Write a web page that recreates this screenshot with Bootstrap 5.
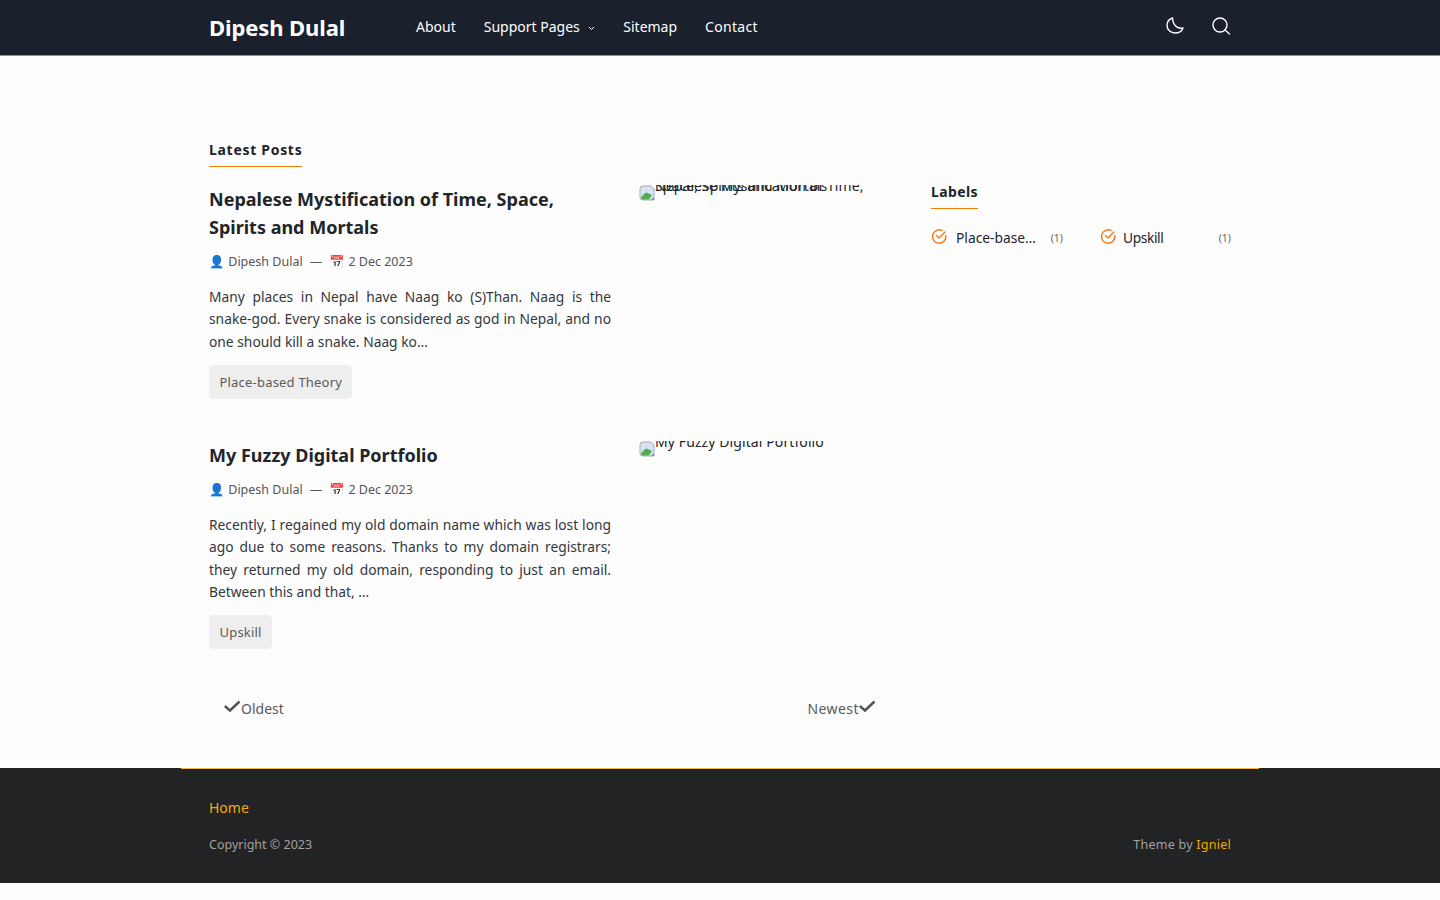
<!DOCTYPE html>
<html lang="en">
<head>
  <meta charset="UTF-8">
  <title>Dipesh Dulal</title>
  <link href="https://cdn.jsdelivr.net/npm/bootstrap@5.3.3/dist/css/bootstrap.min.css" rel="stylesheet">
  <style>
    body { font-family: "Noto Sans", sans-serif; font-size: 13.8px; line-height: 22px; color: #212529; background: #fdfdfd; }
    a { text-decoration: none; }
    .site-wrap { width: 1078px; margin: 0 auto; padding: 0 28px; }
    .site-head { height: 56px; background: #1a202c; border-bottom: 1px solid #8a9099; }
    .head-row { padding-bottom: 2px; }
    .brand-name { width: 207px; color: #fff; font-size: 22px; font-weight: 700; letter-spacing: -.1px; line-height: 54px; }
    .head-link { color: #fff; font-size: 14px; margin-right: 28px; }
    .head-link:last-child { letter-spacing: .3px; margin-right: 0; }
    .head-caret { margin-left: 8px; margin-right: .5px; }
    .head-tools { gap: 26px; padding-bottom: 2px; }
    .head-btn { color: #fff; display: block; line-height: 0; }
    .page-main { padding-top: 83px; height: 712px; }
    .post-col { width: 682px; }
    .side-col { width: 300px; margin-left: 40px; padding-top: 42px; }
    .sec-title { display: inline-block; font-size: 14px; font-weight: 700; letter-spacing: .7px; line-height: 20px; padding-bottom: 6px; border-bottom: 1px solid #f57c00; }
    .side-col .sec-title { letter-spacing: .4px; }
    .post-row { gap: 28px; margin-top: 18px; height: 238px; }
    .post-row + .post-row { margin-top: 18px; height: 232px; }
    .post-text { width: 402px; }
    .post-title { font-size: 18px; font-weight: 700; line-height: 28px; margin: 0 0 11px; color: #212529; }
    .post-meta { font-size: 12.5px; line-height: 20px; color: #555; margin-bottom: 14px; }
    .meta-dash { margin: 0 7px; }
    .post-sum { text-align: justify; margin: 0 0 12px; line-height: 22.3px; color: #33383d; }
    .tag-pill { display: inline-block; background: #eee; color: #5a5a5a; font-size: 13px; letter-spacing: .2px; line-height: 18px; padding: 8px 10px 8px 10.5px; border-radius: 5px; }
    .thumb-box { position: relative; width: 252px; height: 17px; overflow: hidden; font-size: 14px; line-height: 22px; }
    .thumb-box svg { position: absolute; left: 0; top: 0; }
    .alt-line { position: absolute; left: 16px; top: -10px; white-space: nowrap; letter-spacing: .1px; }
    .pager-row { padding: 0 15px; margin-top: 25px; color: #5a5a5a; font-size: 14px; }
    .pager-new { letter-spacing: .45px; }
    .pager-row svg { margin-top: 1px; }
    .label-row { margin-top: 18px; }
    .label-item { width: 169px; }
    .label-item + .label-item { width: 131px; }
    .label-tick { margin-top: -3px; }
    .label-name { color: #212529; }
    .label-name-a { margin-left: 8px; }
    .label-name-b { margin-left: 6px; letter-spacing: -.4px; }
    .label-count { color: #666; font-size: 10.5px; }
    .label-count-a { padding-right: 37px; }
    .site-foot { height: 115px; background: #222325; }
    .foot-inner { width: 1078px; margin: 0 auto; padding: 28px 28px 0; border-top: 1px solid #f0b73f; }
    .foot-home { color: #f4ab00; font-size: 14px; line-height: 22px; }
    .foot-copy { color: #a0a0a0; font-size: 12.5px; line-height: 20px; margin-top: 16px; }
    .foot-theme { letter-spacing: .25px; }
    .foot-copy a { color: #f4ab00; }
  </style>
</head>
<body>
  <header class="site-head">
    <div class="site-wrap head-row d-flex align-items-center">
      <a class="brand-name" href="#">Dipesh Dulal</a>
      <nav class="d-flex align-items-center">
        <a class="head-link" href="#">About</a>
        <a class="head-link" href="#">Support Pages<svg class="head-caret" width="7" height="5" viewBox="0 0 7 5" fill="none" stroke="#fff" stroke-width="1"><path d="M1 1l2.500 2.500L6 1"/></svg></a>
        <a class="head-link" href="#">Sitemap</a>
        <a class="head-link" href="#">Contact</a>
      </nav>
      <div class="head-tools ms-auto d-flex align-items-center">
        <a class="head-btn" href="#"><svg width="20" height="20" viewBox="0 0 20 20" fill="none" stroke="#fff" stroke-width="1.400" stroke-linejoin="round"><path d="M7.500 2C4 3 2 6 2 9.500 2 13.500 5.500 17 10 17c4 0 7-2 8-5-5 1-10-2-10.500-10z"/></svg></a>
        <a class="head-btn" href="#"><svg width="20" height="20" viewBox="0 0 20 20" fill="none" stroke="#fff" stroke-width="1.400"><circle cx="9" cy="9" r="7"/><path d="M14 14l4.500 4" stroke-linecap="round"/></svg></a>
      </div>
    </div>
  </header>

  <main class="page-main">
    <div class="site-wrap d-flex">
      <div class="post-col">
        <div class="sec-title">Latest Posts</div>

        <article class="post-row d-flex">
          <div class="post-text">
            <h2 class="post-title">Nepalese Mystification of Time, Space, Spirits and Mortals</h2>
            <div class="post-meta">👤 Dipesh Dulal<span class="meta-dash">—</span>📅 2 Dec 2023</div>
            <p class="post-sum">Many places in Nepal have Naag ko (S)Than. Naag is the snake-god. Every snake is considered as god in Nepal, and no one should kill a snake. Naag ko…</p>
            <a class="tag-pill" href="#">Place-based Theory</a>
          </div>
          <div class="thumb-box">
            <svg width="16" height="16" viewBox="0 0 16 16"><path d="M1 4a3 3 0 0 1 3-3h8l3 3v11H4a3 3 0 0 1-3-3z" fill="#d6e3f5" stroke="#a8adb3"/><path d="M2 13c2-4 5-6 7-5l4 2-3 4.500H3.500z" fill="#4caf50"/><path d="M12 15l3-3v3z" fill="#888"/></svg>
            <span class="alt-line">Nepalese Mystification of Time,</span>
            <span class="alt-line">Space, Spirits and Mortals</span>
          </div>
        </article>

        <article class="post-row d-flex">
          <div class="post-text">
            <h2 class="post-title">My Fuzzy Digital Portfolio</h2>
            <div class="post-meta">👤 Dipesh Dulal<span class="meta-dash">—</span>📅 2 Dec 2023</div>
            <p class="post-sum">Recently, I regained my old domain name which was lost long ago due to some reasons. Thanks to my domain registrars; they returned my old domain, responding to just an email. Between this and that, …</p>
            <a class="tag-pill" href="#">Upskill</a>
          </div>
          <div class="thumb-box">
            <svg width="16" height="16" viewBox="0 0 16 16"><path d="M1 4a3 3 0 0 1 3-3h8l3 3v11H4a3 3 0 0 1-3-3z" fill="#d6e3f5" stroke="#a8adb3"/><path d="M2 13c2-4 5-6 7-5l4 2-3 4.500H3.500z" fill="#4caf50"/><path d="M12 15l3-3v3z" fill="#888"/></svg>
            <span class="alt-line">My Fuzzy Digital Portfolio</span>
          </div>
        </article>

        <div class="pager-row d-flex justify-content-between">
          <a class="text-reset d-flex" href="#"><svg width="17" height="17" viewBox="0 0 17 17" fill="none" stroke="#555" stroke-width="2.500"><path d="M.8 7l5.200 4.500L15.500 2.500"/></svg>Oldest</a>
          <a class="text-reset pager-new d-flex" href="#">Newest<svg width="17" height="17" viewBox="0 0 17 17" fill="none" stroke="#555" stroke-width="2.500"><path d="M.8 7l5.200 4.500L15.500 2.500"/></svg></a>
        </div>
      </div>

      <aside class="side-col">
        <div class="sec-title">Labels</div>
        <div class="label-row d-flex">
          <div class="label-item d-flex align-items-center">
            <svg class="label-tick" width="17" height="17" viewBox="0 0 17 17" fill="none" stroke="#f57c20" stroke-width="1.500" stroke-linecap="round"><path d="M14.800 7.500A6.700 6.700 0 1 1 11 2.500"/><path d="M5.500 7.500l2.500 2.500 6-6"/></svg>
            <span class="label-name label-name-a">Place-base…</span>
            <span class="label-count label-count-a ms-auto">(1)</span>
          </div>
          <div class="label-item d-flex align-items-center">
            <svg class="label-tick" width="17" height="17" viewBox="0 0 17 17" fill="none" stroke="#f57c20" stroke-width="1.500" stroke-linecap="round"><path d="M14.800 7.500A6.700 6.700 0 1 1 11 2.500"/><path d="M5.500 7.500l2.500 2.500 6-6"/></svg>
            <span class="label-name label-name-b">Upskill</span>
            <span class="label-count ms-auto">(1)</span>
          </div>
        </div>
      </aside>
    </div>
  </main>

  <footer class="site-foot">
    <div class="foot-inner">
      <a class="foot-home" href="#">Home</a>
      <div class="foot-copy d-flex justify-content-between">
        <span>Copyright © 2023</span>
        <span class="foot-theme">Theme by <a href="#">Igniel</a></span>
      </div>
    </div>
  </footer>
  <script src="https://cdn.jsdelivr.net/npm/bootstrap@5.3.3/dist/js/bootstrap.bundle.min.js"></script>
</body>
</html>
